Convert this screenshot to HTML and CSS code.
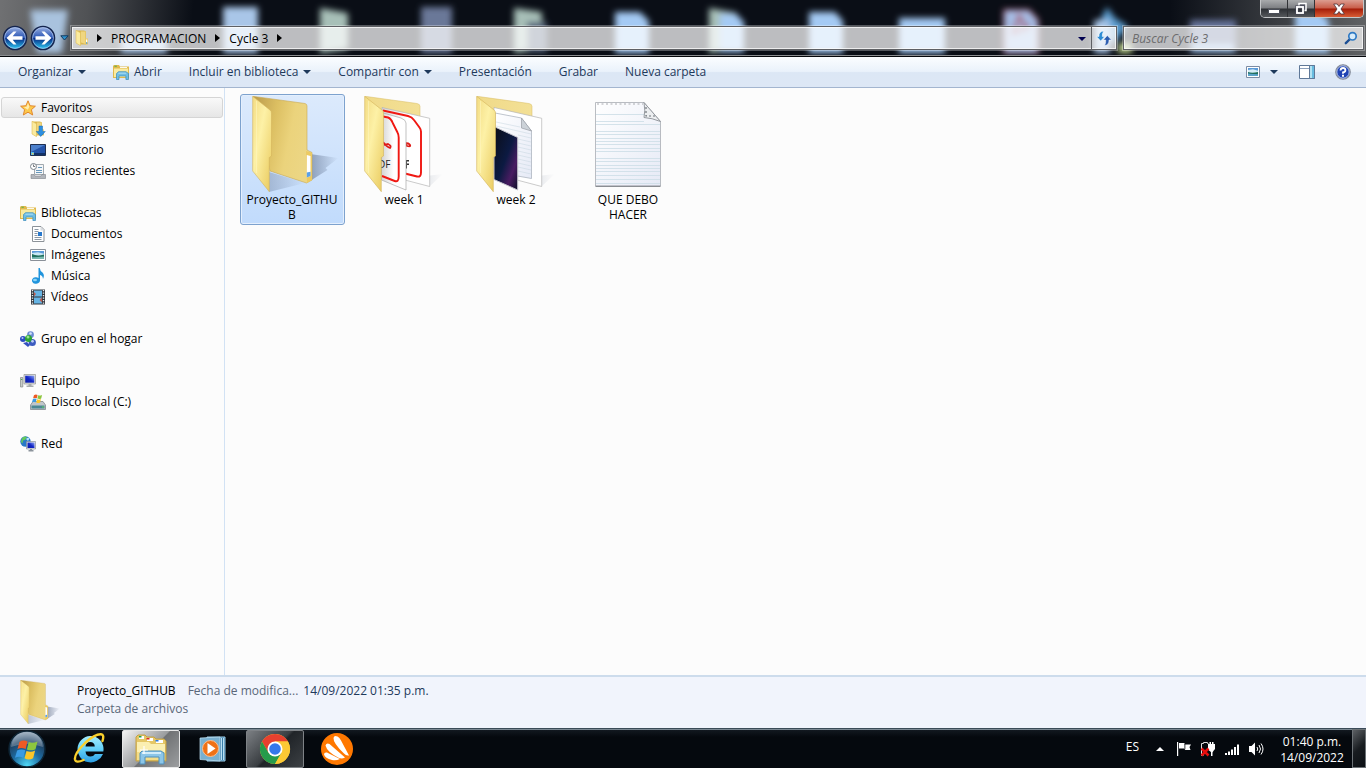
FILE: index.html
```html
<!DOCTYPE html>
<html lang="es">
<head>
<meta charset="utf-8">
<title>Cycle 3</title>
<link rel="stylesheet" href="styles.css">
</head>
<body>
<svg class="defs" width="0" height="0" aria-hidden="true">
  <defs>
    <linearGradient id="flap" x1="0" y1="0" x2="1" y2="1"><stop offset="0" stop-color="#f3dc84"/><stop offset=".4" stop-color="#fdf1a6"/><stop offset="1" stop-color="#e9c95c"/></linearGradient>
    <linearGradient id="back" x1="0" y1="0" x2="1" y2=".3"><stop offset="0" stop-color="#b99a4c"/><stop offset=".4" stop-color="#dcbf62"/><stop offset=".7" stop-color="#ebd37c"/><stop offset="1" stop-color="#ecd684"/></linearGradient>
    <linearGradient id="back-light" x1="0" y1="0" x2="1" y2="0"><stop offset="0" stop-color="#f0da88"/><stop offset="1" stop-color="#f3e096"/></linearGradient>
    <linearGradient id="shade" x1="0" y1="0" x2="1" y2="0"><stop offset="0" stop-color="#4a5a78" stop-opacity=".5"/><stop offset="1" stop-color="#4a5a78" stop-opacity="0"/></linearGradient>
    <linearGradient id="paper" x1="0" y1="0" x2="1" y2="0"><stop offset="0" stop-color="#d4d4d4"/><stop offset=".5" stop-color="#fff"/></linearGradient>
    <linearGradient id="note" x1="0" y1="0" x2="1" y2="1"><stop offset="0" stop-color="#fff"/><stop offset="1" stop-color="#e6eaf6"/></linearGradient>
    <linearGradient id="night" x1="0" y1="0" x2="1" y2="1"><stop offset="0" stop-color="#0b0d16"/><stop offset=".5" stop-color="#0c1a42"/><stop offset=".75" stop-color="#4a1c62"/><stop offset="1" stop-color="#0c1028"/></linearGradient>
    <linearGradient id="orb" x1="0" y1="0" x2="0" y2="1"><stop offset="0" stop-color="#9fb4e4"/><stop offset=".48" stop-color="#2a56b4"/><stop offset=".52" stop-color="#062c86"/><stop offset="1" stop-color="#2fd2fa"/></linearGradient>
    <radialGradient id="start" cx=".5" cy=".95" r=".9"><stop offset="0" stop-color="#4fd8f6"/><stop offset=".45" stop-color="#1d6aa0"/><stop offset=".75" stop-color="#1f4466"/><stop offset="1" stop-color="#7f97ac"/></radialGradient>
    <linearGradient id="screen" x1="0" y1="1" x2="1" y2="0"><stop offset="0" stop-color="#0818a0"/><stop offset=".5" stop-color="#1428c8"/><stop offset="1" stop-color="#8ca4f4"/></linearGradient>
    <linearGradient id="ie" x1="0" y1="0" x2="0" y2="1"><stop offset="0" stop-color="#a6ecfc"/><stop offset=".5" stop-color="#62d0f8"/><stop offset="1" stop-color="#2c9ee4"/></linearGradient>
    <symbol id="library" viewBox="0 0 16 16">
      <path fill="#e0b94c" d="M0 2l1-1h5l1 1.500h9V14H0z"/><path fill="#f9eaa0" d="M1 4.500h14V13H1z"/><path fill="#4daf4a" d="M1.500 1.700h2.300v1H1.500z"/>
      <path fill="#fff" d="M7 3h7v.9H7z"/><path fill="#6fbde4" stroke="#3a8cbc" stroke-width=".7" d="M3.500 15.500v-6l2-1.800h7.500l2.500 1.800v6h-2.600v-3.500H6v3.500z"/><path fill="#c4eafa" d="M5 9.500l1-.8h6.500l1 .8z"/>
    </symbol>
    <symbol id="folder-mini" viewBox="0 0 16 16">
      <path fill="#dcb950" d="M2 .5h8l2 1v13H5z"/><path fill="#f0d680" d="M7 1.500h4.500v12.500L7 12.500z"/><path fill="#fbeb9e" stroke="#dfbe58" stroke-width=".6" d="M2 .3l4.500 2.500V15.700L2 13z"/><path fill="#eccb64" d="M11 8.500h3v6h-3z"/><path fill="#fff" d="M12 9.500h1.300v3H12z"/><path fill="#4a9ae0" d="M12 12.200h1.300v1.500H12z"/>
    </symbol>
    <symbol id="picture" viewBox="0 0 16 16">
      <path fill="#fff" stroke="#8a9098" d="M.5 2.500h15v11H.5z"/><path fill="#5a9ad8" d="M2 4h12v8H2z"/><path fill="#c8e6f4" d="M2 6l6-.8 6 1.500V9H2z"/><path fill="#20705c" d="M2 7q5 2.500 12 .5v3H2z"/><path fill="#79b9b0" d="M2 10.500l12-1V12H2z"/>
    </symbol>
    <symbol id="folder-flap" viewBox="0 0 96 96">
      <path fill="url(#flap)" stroke="#d3b45a" stroke-width=".6" d="M8.700.3 26 14q1.500 1.200 1.500 3v43l-2.200 1.500V95.700L8.700 75z"/><path stroke="#fff6c0" stroke-width=".8" fill="none" opacity=".7" d="M12.500 5v72"/>
    </symbol>
    <symbol id="folder" viewBox="0 0 96 96">
      <path fill="url(#shade)" d="M66 58l28.500 4-13 10 2 2L66 85z"/><path fill="url(#shade)" opacity=".6" d="M25 76l36 11-36 9z"/>
      <path fill="url(#back)" stroke="#c9a850" stroke-width=".6" d="M9 .3l52 7.200q2 .5 2 2.500v44l5 2.500V84l-5.500 3L26 75z"/>
      <path fill="#ecca62" d="M62 55l6 2v27l-5 3z"/><path fill="#fff" d="M62.800 59l3.700 1v20l-3.700 1.500z"/><path fill="#58a0ea" d="M62.800 76.500l3.700-.7v4.200l-3.700 1.500z"/><use href="#folder-flap"/>
    </symbol>
  </defs>
</svg>

<header class="titlebar">
  <svg class="glass" viewBox="0 0 1366 57" preserveAspectRatio="xMinYMin slice" aria-hidden="true">
    <defs>
      <filter id="soft" x="-10%" y="-30%" width="120%" height="160%"><feGaussianBlur stdDeviation="3"/></filter>
      <linearGradient id="leftglow" x1="0" y1="20" x2="190" y2="40" gradientUnits="userSpaceOnUse"><stop offset="0" stop-color="#6f7072"/><stop offset=".45" stop-color="#505255"/><stop offset="1" stop-color="#0a0e16"/></linearGradient>
      <linearGradient id="rightglow" x1="0" y1="0" x2="1" y2="0"><stop offset="0" stop-color="#0a0e16"/><stop offset="1" stop-color="#606264"/></linearGradient>
    </defs>
    <path fill="#0a0e16" d="M0 0h1366v57H0z"/><path fill="url(#leftglow)" d="M0 0h260v57H0z"/><path fill="url(#rightglow)" d="M1170 0h196v57h-196z"/>
    <g filter="url(#soft)">
      <path fill="#a9c2de" d="M30 10h38l-6 43H37z"/><path fill="#a9c6e8" d="M121 38h46v15h-46zM223 7h35v46h-35z"/>
      <path fill="#a7c0b8" d="M320 8l28 5v36l-28 4z"/><path fill="#6a7898" d="M421 7h31v46h-31z"/>
      <path fill="#a7c0b8" d="M514 8l28 4v37l-28 4z"/><path fill="#52627a" d="M527 22h20v30h-20z"/>
      <path fill="#a4caf4" d="M615 12h25l9 9v32h-34zM809 12h26l8 9v32h-34zM899 18h46v35h-46z"/>
      <path fill="#a7c0b8" d="M709 8l28 5v36l-28 4z"/><path fill="#a4caf4" d="M720 14h16l8 8v30h-24z"/>
      <path fill="#a4bfe8" stroke="#a44a5c" stroke-width="2" d="M1004 10h25l9 10v33h-34z"/><path stroke="#a44a5c" stroke-width="3" fill="none" d="M1019 16l-6 17 15-5z"/>
      <path fill="#5c9ed0" d="M1107 7l8 11 13 8-14 18-18-16z"/><path fill="#a9c6e8" d="M1094 20h16v33h-16z"/><path fill="#bcd08c" d="M1118 43h14v10h-14z"/>
      <path fill="#66739a" d="M1190 20h46v32h-46z"/><path fill="#a4caf4" d="M1192 45h42v7h-42zM1295 12h25l9 9v32h-34z"/>
    </g>
  </svg>
  <div class="window-controls">
    <button class="win-btn" aria-label="Minimizar"><svg width="12" height="16" viewBox="0 0 12 16"><path fill="#fff" stroke="#4a4e58" d="M.5 8.500h11v4H.5z"/></svg></button>
    <button class="win-btn" aria-label="Restaurar"><svg width="12" height="13" viewBox="0 0 12 13"><path fill="#5a5e68" stroke="#fff" stroke-width="1.500" d="M4 4V1.500h7v7H8.500"/><path fill="none" stroke="#fff" stroke-width="2" d="M2 5h6v6H2z"/><path fill="none" stroke="#444858" stroke-width=".6" d="M.6 3.600h8.800v8.800H.6zM3.300 6.300h3.400v3.400H3.300z"/></svg></button>
    <button class="win-btn close" aria-label="Cerrar"><svg width="12" height="12" viewBox="0 0 12 12"><path fill="#fff" stroke="#4c3036" stroke-width=".8" d="M.7 1h3.500L6 3.500 7.800 1h3.500L8 6l3.300 5H7.800L6 8.500 4.200 11H.7L4 6z"/></svg></button>
  </div>
  <div class="nav-row">
    <div class="history">
      <button class="round" aria-label="Atrás"><svg width="26" height="26" viewBox="0 0 26 26"><circle cx="13" cy="13" r="11.500" fill="url(#orb)" stroke="#14244e" stroke-width="1.600"/><circle cx="13" cy="13" r="10.400" fill="none" stroke="#b6cdf4" stroke-width=".7"/><path fill="#fff" d="M4.500 13l7-6.500h3L10.700 11.200H20.500v3.600h-9.800l3.800 4.700h-3z"/></svg></button>
      <button class="round" aria-label="Adelante"><svg width="26" height="26" viewBox="0 0 26 26"><circle cx="13" cy="13" r="11.500" fill="url(#orb)" stroke="#14244e" stroke-width="1.600"/><circle cx="13" cy="13" r="10.400" fill="none" stroke="#b6cdf4" stroke-width=".7"/><path fill="#fff" d="M21.500 13l-7-6.500h-3l3.800 4.700H5.500v3.600h9.800l-3.800 4.700h3z"/></svg></button>
      <button class="recent" aria-label="Páginas recientes"><svg width="9" height="6" viewBox="0 0 9 6"><path fill="#2f93cf" stroke="#123a60" d="M.8.800h7.400L4.500 5z"/></svg></button>
    </div>
    <nav class="address" aria-label="Ruta">
      <svg class="crumb-icon" width="16" height="16"><use href="#folder-mini"/></svg>
      <span class="sep"></span>
      <button class="crumb">PROGRAMACION</button><span class="sep"></span>
      <button class="crumb">Cycle 3</button><span class="sep"></span>
      <button class="addr-drop" aria-label="Ubicaciones anteriores"><span class="caret navy"></span></button>
      <button class="refresh" aria-label="Actualizar"><svg width="16" height="16" viewBox="0 0 16 16"><path fill="#2e8cd4" stroke="#fff" stroke-width=".5" d="M7.800 1Q2.500 1.500 3 6.500H.5l4.200 4.500 4-4.500H6.300Q6 3.500 7.800 1z"/><path fill="#2a5cb0" stroke="#fff" stroke-width=".5" d="M8.500 15.500q4.800-.5 4.500-5.500h2.500l-4.200-4.500L7.300 10H9.700q.3 3-1.200 5.500z"/></svg></button>
    </nav>
    <form class="search" role="search"><input type="search" aria-label="Buscar" placeholder="Buscar Cycle 3"><button class="search-go" type="button" aria-label="Buscar"><svg width="14" height="14" viewBox="0 0 14 14"><path stroke="#1c4f94" stroke-width="2.400" stroke-linecap="round" d="M6 8l-4.200 4.200"/><circle cx="8.500" cy="5.300" r="3.700" fill="#d8ecfa" stroke="#2f7ac4" stroke-width="1.700"/></svg></button></form>
  </div>
</header>

<div class="toolbar">
  <button class="tool">Organizar <span class="caret"></span></button>
  <button class="tool open"><svg width="16" height="16"><use href="#library"/></svg>Abrir</button>
  <button class="tool">Incluir en biblioteca <span class="caret"></span></button>
  <button class="tool">Compartir con <span class="caret"></span></button>
  <button class="tool">Presentación</button>
  <button class="tool">Grabar</button>
  <button class="tool">Nueva carpeta</button>
  <div class="tool-right">
    <button class="tool view" aria-label="Cambiar la vista"><svg width="14" height="14" viewBox="0 0 14 14"><path fill="#fff" stroke="#7c8ca4" d="M.5 1.500h13v11H.5z"/><path fill="#5a9ad8" d="M2 3h10v8H2z"/><path fill="#d4ecf6" d="M2 5l5-.8 5 1.500V8H2z"/><path fill="#20705c" d="M2 7q4 1.500 10 0v2.500L2 8.500z"/><path fill="#5aa4c8" d="M2 9l10 .5V11H2z"/></svg></button>
    <button class="tool more" aria-label="Más opciones"><span class="caret"></span></button>
    <button class="tool pane" aria-label="Panel de vista previa"><svg width="16" height="14" viewBox="0 0 16 14"><path fill="#fff" stroke="#5f7898" d="M.5.500h15v13H.5z"/><path stroke="#8aa0bc" d="M1 3.500h9"/><path fill="#68bce0" stroke="#5f7898" d="M10.500.500h5v13h-5z"/><path fill="#b4e2f2" d="M11 1h2v12h-2z"/></svg></button>
    <button class="tool" aria-label="Ayuda"><svg width="16" height="16" viewBox="0 0 16 16"><circle cx="8" cy="8" r="7.200" fill="#1f43b4" stroke="#868c98" stroke-width="1.300"/><circle cx="8" cy="8" r="6.200" fill="none" stroke="#dfe8f8" stroke-width=".8"/><path fill="none" stroke="#fff" stroke-width="1.800" d="M5.500 6.500Q5.600 4 8 4t2.400 2.200Q10.400 8 8 8.300v1.500"/><path fill="#fff" d="M7 10.800h2v1.900H7z"/></svg></button>
  </div>
</div>

<div class="main">
  <nav class="sidebar" aria-label="Panel de navegación">
    <ul class="group">
      <li><a href="#" class="node current"><svg viewBox="0 0 16 16"><path fill="#fcc94c" stroke="#df7f22" stroke-width=".9" d="M8 .8l2.100 4.900 5.300.5-4 3.500 1.300 5.300L8 12.200 3.300 15l1.300-5.300-4-3.500 5.300-.5z"/><path fill="#ffedb0" d="M8 3l1.400 3.700-1.500 3-4-2.500 2.700-.4z"/></svg>Favoritos</a></li>
      <li><a href="#" class="node child"><svg viewBox="0 0 16 16"><use href="#folder-mini"/><path fill="#2d8fe0" stroke="#1668b0" stroke-width=".5" d="M9 5h3.500v5.500h2.800L10.700 15.500 6.300 10.500H9z"/></svg>Descargas</a></li>
      <li><a href="#" class="node child"><svg viewBox="0 0 16 16"><path fill="#2453a8" stroke="#203050" d="M.5 2.500h15v11H.5z"/><path fill="#4c80cc" d="M1 3h14L1 10z"/><path fill="#123268" d="M1 11h14v2H1z"/><path fill="#54b8ec" d="M1 10h3v3H1z"/><path fill="#eac84c" d="M2 11h1.500v1.500H2z"/></svg>Escritorio</a></li>
      <li><a href="#" class="node child"><svg viewBox="0 0 16 16"><path fill="#f4f6f8" stroke="#8c949c" stroke-width=".8" d="M4.500 1.500h9v10h-9z"/><path stroke="#6798bc" d="M8 4.500h4M6 7.500h6M6 9.500h6"/><path fill="#b2b6bc" stroke="#7c8288" stroke-width=".6" d="M1 11.500h3l1 1.500h6l1-1.500h3.500v4H1z"/><circle cx="3.500" cy="3.500" r="3" fill="#fff" stroke="#7c848c"/><path fill="none" stroke="#50565c" stroke-width=".8" d="M3.500 1.500v2h1.700"/></svg>Sitios recientes</a></li>
    </ul>
    <ul class="group">
      <li><a href="#" class="node"><svg viewBox="0 0 16 16"><use href="#library"/></svg>Bibliotecas</a></li>
      <li><a href="#" class="node child"><svg viewBox="0 0 16 16"><path fill="#fff" stroke="#8c9298" d="M2.500.500h8.500l3 3v12H2.500z"/><path fill="#d8dce0" d="M10.500 1v3.500H14z"/><path stroke="#8c98a4" d="M4.500 3.500h4M4.500 5.500h4M4.500 7.500h3M4.500 9.500h3M4.500 11.500h7M4.500 13.500h7"/><path fill="#2878cc" d="M8 6h4v4H8z"/></svg>Documentos</a></li>
      <li><a href="#" class="node child"><svg viewBox="0 0 16 16"><use href="#picture"/></svg>Imágenes</a></li>
      <li><a href="#" class="node child"><svg viewBox="0 0 16 16"><path fill="#2094dc" d="M8.500 0h1.300Q10 3 12.500 4.500 15 7 13 11q-.2-3.500-3-4v5.500a4 3.300 0 1 1-1.500-2.600z"/><ellipse cx="5" cy="12" rx="2" ry="1.200" fill="#8cd4f8"/></svg>Música</a></li>
      <li><a href="#" class="node child"><svg viewBox="0 0 16 16"><path fill="#30343a" d="M1 .5h14v15H1z"/><path fill="#66b4e4" d="M4 1.500h8v6H4zM4 8.500h8v6H4z"/><path fill="#ba5c50" d="M4 3l2 2-2 2.500zM12 8.500v5L9.500 11z"/><path stroke="#e8ecf0" stroke-width="1.400" stroke-dasharray="1.300 1.200" d="M2.500 1v14M13.500 1v14"/></svg>Vídeos</a></li>
    </ul>
    <ul class="group">
      <li><a href="#" class="node"><svg viewBox="0 0 16 16"><circle cx="10.500" cy="3.700" r="3.400" fill="#6c8cd4"/><circle cx="3" cy="8" r="3" fill="#2c4ec0"/><circle cx="12.300" cy="11.500" r="3.600" fill="#3c5cc0"/><path fill="#3450c0" d="M3 12l4-1 3 3-2 2z"/><circle cx="8.500" cy="7.500" r="3.500" fill="#2ca434"/><circle cx="8" cy="6" r="1.500" fill="#9ce490"/><circle cx="10.500" cy="2.500" r="1.300" fill="#d4e2fa"/><circle cx="2.500" cy="7" r="1" fill="#b4cafa"/><circle cx="12.500" cy="10.300" r="1.400" fill="#bccdf6"/></svg>Grupo en el hogar</a></li>
    </ul>
    <ul class="group">
      <li><a href="#" class="node"><svg viewBox="0 0 16 16"><path fill="#e0e0dc" stroke="#909494" stroke-width=".7" d="M4 1.500h11.500v9.500H4z"/><path fill="url(#screen)" d="M5.200 2.700h9.100v7H5.200z"/><path fill="#a8acac" d="M8.500 11h3v1.500h2V14h-7v-1.500h2z"/><path fill="#c8ccc8" stroke="#848888" stroke-width=".7" d="M.500 4.500h2.300v9.500H.5z"/><path fill="#4caf50" d="M1 6h1.300v1H1z"/></svg>Equipo</a></li>
      <li><a href="#" class="node child"><svg viewBox="0 0 16 16"><path fill="#c0c6ca" stroke="#747c82" stroke-width=".7" d="M.5 11L3 7.500h10L15.500 11v4.500H.5z"/><path fill="#4b8894" d="M1.500 11.500h13v3h-13z"/><path fill="#62d05c" d="M12 12.500h2v1h-2z"/><g transform="translate(2 -1) scale(.56)"><path fill="#ee5a24" d="M3.500 4q3-2 6.500-.5l-1.500 6Q5 8 2 9.500z"/><path fill="#8cc63e" d="M11 4q3 1.500 7-.5l-1.600 6.200Q13 11.500 9.500 10z"/><path fill="#3a9be4" d="M1.700 10.700q3-1.400 6.500-.2l-1.600 6Q3.500 15 0 16.500z"/><path fill="#fcc628" d="M9.200 11.200q3.400 1.500 6.900-.4l-1.600 6.200q-3.500 2-6.900 0z"/></g></svg>Disco local (C:)</a></li>
    </ul>
    <ul class="group">
      <li><a href="#" class="node"><svg viewBox="0 0 16 16"><circle cx="5.500" cy="5.500" r="5.200" fill="#2878c8"/><path fill="#62c85c" d="M3 1q3-1.200 4 .5L5 4l-2 .5-.5 3L1 6q0-3 2-5z"/><path fill="#b4e4fa" d="M6 3q2-2 3.500-.5L8 5z"/><path fill="#dfe2e6" stroke="#7c8490" stroke-width=".6" d="M6.500 5.500h9v7.500h-9z"/><path fill="url(#screen)" d="M7.500 6.500h7v5.500h-7z"/><path fill="#8c949c" d="M10 13h2v1h1.500v1.500h-5V14H10z"/></svg>Red</a></li>
    </ul>
  </nav>

  <main class="files">
    <button class="file selected"><svg class="thumb" viewBox="0 0 96 96"><use href="#folder"/></svg><span>Proyecto_GITHU<br>B</span></button>
    <button class="file"><svg class="thumb" viewBox="0 0 96 96">
      <path fill="url(#shade)" opacity=".25" d="M70 80l17-2-13 12z"/>
      <path fill="url(#back-light)" stroke="#d8bc64" stroke-width=".5" d="M9 .3l52 7.200q3 .5 3 3V25L26 60z"/>
      <path fill="url(#paper)" stroke="#b4b4b4" stroke-width=".7" d="M26 11.500l47.700 10.800v68.200L26 78z"/>
      <path fill="none" stroke="#f01812" stroke-width="1.900" d="M27 14.500l25 5.500q4 1 6 4l5.500 7.500q1.500 2 1.500 4v41q0 5-4 4l-12-3"/>
      <path fill="#333" d="M50 64h3v1.500h-2v2h2v1.500h-2v3.500h-1z"/><path fill="none" stroke="#df1c18" stroke-width="1.800" d="M48 47q5 0 6 2t-3 1z"/>
      <path fill="url(#paper)" stroke="#a8a8a8" stroke-width=".7" d="M25.500 16.500L45 22q5 2 5 5v67L25.500 84z"/>
      <path fill="none" stroke="#f01812" stroke-width="1.900" d="M27 20.500l5 1q3 1 5 6l4.500 9q1.200 2 1.200 5v39q0 6-4 4.500L26 80"/>
      <path fill="none" stroke="#df1c18" stroke-width="1.800" d="M27 46q4 5 7 6 2-2-2-4l-4 1"/><text x="22" y="72" font-family="Open Sans, sans-serif" font-size="10" fill="#222">DF</text><use href="#folder-flap"/></svg><span>week 1</span></button>
    <button class="file"><svg class="thumb" viewBox="0 0 96 96">
      <path fill="url(#shade)" opacity=".25" d="M70 80l17-2-13 12z"/>
      <path fill="url(#back-light)" stroke="#d8bc64" stroke-width=".5" d="M9 .3l52 7.200q3 .5 3 3V25L26 60z"/>
      <path fill="#fff" stroke="#b4b4b4" stroke-width=".7" d="M26 11.500l47.700 10.800v68.200L26 78z"/>
      <path fill="url(#note)" stroke="#a4acb8" stroke-width=".7" d="M27 17l26.500 5 10 13v47.500L27 76z"/><path fill="#ccd2d8" stroke="#989ca4" stroke-width=".7" d="M53.500 22v10l10 3z"/>
      <path stroke="#c4d4de" stroke-width=".5" d="M28 26l24 5M28 30l35 8M50 39l13 3M50 43l13 3M50 47l13 3M50 51l13 3M50 55l13 3M50 59l13 3M50 63l13 3M50 67l13 3M50 71l13 3M50 75l13 3"/>
      <path fill="url(#night)" stroke="#c4c4cc" stroke-width="1" d="M26 30.500l23.700 11V94L26 83.500z"/><use href="#folder-flap"/></svg><span>week 2</span></button>
    <button class="file"><svg class="thumb" viewBox="0 0 96 96">
      <path fill="url(#note)" stroke="#a8acb2" stroke-width=".8" d="M15.500 6.500H64l16.500 19V90h-65z"/><path stroke="#777b80" d="M15.500 90.300h65"/>
      <path stroke="#a9abb0" stroke-width="1" stroke-dasharray="2 2.500" d="M17 8h46"/>
      <path stroke="#cfdfe8" stroke-width=".9" d="M16 18.500h48M16 25.500h48M16 28.500h64M16 35.500h64M16 38.500h64M16 42.500h64M16 45.500h64M16 48.500h64M16 52.500h64M16 55.500h64M16 62.500h64M16 65.500h64M16 69.500h64M16 72.500h64M16 75.500h64M16 79.500h64M16 83.500h64M16 87.500h64"/>
      <path fill="#eceef0" stroke="#8b9096" stroke-width=".9" d="M64 6.500q1.500 8 0 15 8 .5 16.500 4z"/><path fill="none" stroke="#6f747a" stroke-width="1.200" stroke-dasharray="2 2" d="M66 11v9h9"/></svg><span>QUE DEBO HACER</span></button>
  </main>
</div>

<footer class="details">
  <svg class="details-icon" viewBox="6 0 90 96"><use href="#folder" width="96" height="96"/></svg>
  <div class="details-text">
    <div class="details-line"><span class="name">Proyecto_GITHUB</span><span class="label">Fecha de modifica...</span><span class="value">14/09/2022 01:35 p.m.</span></div>
    <div class="label">Carpeta de archivos</div>
  </div>
</footer>

<div class="taskbar">
  <button class="start" aria-label="Inicio"><svg width="38" height="38" viewBox="0 0 38 38"><circle cx="19" cy="19" r="18" fill="url(#start)" stroke="#0d2434" stroke-width="1.500"/><path fill="#fff" opacity=".25" d="M3 17Q5 2 19 2t16 15q-16-6-32 0z"/><g transform="translate(7 7) scale(1.250)"><path fill="#ee5a24" d="M3.500 4q3-2 6.500-.5l-1.500 6Q5 8 2 9.500z"/><path fill="#8cc63e" d="M11 4q3 1.500 7-.5l-1.600 6.200Q13 11.500 9.500 10z"/><path fill="#3a9be4" d="M1.700 10.700q3-1.400 6.500-.2l-1.600 6Q3.500 15 0 16.500z"/><path fill="#fcc628" d="M9.200 11.200q3.400 1.500 6.900-.4l-1.600 6.200q-3.500 2-6.900 0z"/></g></svg></button>
  <button class="task" aria-label="Internet Explorer"><svg width="32" height="32" viewBox="0 0 32 32"><path fill="url(#ie)" fill-rule="evenodd" d="M17 3a13 13 0 0 1 13.300 15.500H12.500q.5 5 5 5 3 0 4.500-2.500h8A13.200 13.200 0 1 1 17 3zM12.500 13.500h9.300Q21.500 9 17.200 9t-4.700 4.500z"/><path fill="none" stroke="#fad02c" stroke-width="2.400" stroke-linecap="round" d="M29.500 8Q31.500 1.500 28 1.300 22 1 12 10 1 21 2 26.500q1 4 8.500.5"/></svg></button>
  <button class="task active" aria-label="Explorador de archivos"><svg width="34" height="32" viewBox="0 0 34 32"><path fill="#e5c766" stroke="#c3a044" d="M2 4l2-2h7l2 2h7l2 2h8l2 2v20H2z"/><path fill="#fff" d="M5 3h5v3H5zM13 5h6v3h-6zM22 7h7v3h-7z"/><path fill="#1ba24a" d="M5 3h2.500v1.500H5z"/><path fill="#dc2c20" d="M12.500 5h3v1.500h-3z"/><path fill="#2e7ce4" d="M21.500 7h3v1.500h-3z"/><path fill="#fbefb2" d="M3 9h12l2 2h14v16H3z"/><path fill="#f3dd8a" d="M3 19h28v8H3z"/><path fill="#8cc6e8" stroke="#4e90bc" d="M6 31V20l2-2h19l3 2v11h-5v-7H11v7z"/><path fill="#d0ecfa" d="M8 19h19v2H8z"/><path stroke="#fff" stroke-width="1.200" d="M10 13v8M6 17h8"/></svg></button>
  <button class="task" aria-label="Reproductor de Windows Media"><svg width="28" height="26" viewBox="0 0 28 26"><path fill="#397ca8" stroke="#9ed0ec" d="M8 1h18v24H8z"/><path stroke="#b9dff2" d="M22.500 2v22M24.500 2v22"/><path fill="#79b0d0" stroke="#c2e2f4" stroke-width=".7" d="M1 2l20-1v24L1 23.500z"/><circle cx="11.500" cy="12.500" r="8" fill="#ef7116" stroke="#fac090"/><path fill="#fff" d="M8.500 7l8 5.500-8 5.500z"/></svg></button>
  <button class="task running" aria-label="Google Chrome"><svg width="32" height="32" viewBox="0 0 32 32"><circle cx="16" cy="16" r="15" fill="#fcc934"/><path fill="#e8402f" d="M3 8.500A15 15 0 0 1 29 8.500H16L9.500 20z"/><path fill="#269b4b" d="M3 8.500A15 15 0 0 0 16 31l6.500-11.300H9.500z"/><path fill="#fcc934" d="M29 8.500A15 15 0 0 1 16 31l6.500-11.300L16 8.500z"/><circle cx="16" cy="16" r="7.500" fill="#fff"/><circle cx="16" cy="16" r="5.800" fill="#3478ea"/></svg></button>
  <button class="task" aria-label="Avast"><svg width="32" height="32" viewBox="0 0 32 32"><circle cx="16" cy="16" r="16" fill="#ff7800"/><path fill="#fff" d="M12.500 5q.5-3 4-1.500 2 1 3.500 4l8 15q-3 .5-5-2Q12 10 12.500 5zM4.500 12.500q1-3 4-1.500L24 24.500q-3 1.500-6 .5Q6 19 4.500 12.500zM3 21.500q0-2.500 3-2l13 6.500q-4 2-8 1-7-2-8-5.500z"/></svg></button>
  <div class="tray">
    <button class="lang">ES</button>
    <button class="tray-btn up" aria-label="Mostrar iconos ocultos"><svg width="8" height="4" viewBox="0 0 8 4"><path fill="#fff" d="M4 0l4 4H0z"/></svg></button>
    <button class="tray-btn" aria-label="Centro de actividades"><svg width="16" height="16" viewBox="0 0 16 16"><path fill="#fff" d="M1 1h1.200v14H1zM3 2h5.500v1.500H15L13.500 6l1 3H9.500L8 7.500H3z"/><path fill="#05090e" d="M8.500 3h.8v5h-.8z"/></svg></button>
    <button class="tray-btn" aria-label="Batería"><svg width="16" height="16" viewBox="0 0 16 16"><path fill="none" stroke="#ddd" d="M3.500 14.500h-2v-12h2v-1h4v1h1"/><path fill="#fff" d="M8 3h1.500V1h1.500v2h1V1h1.500v2H15v5q-2 2-2.500 3.500V15H11v-4Q8 9 8 8z"/><path stroke="#e80d0d" stroke-width="2.500" d="M1.500 7.500l7 7M8.500 7.500l-7 7"/></svg></button>
    <button class="tray-btn" aria-label="Red"><svg width="16" height="16" viewBox="0 0 16 16"><path fill="#fff" d="M1 12h2v2H1zM4 10.500h2V14H4zM7 8.500h2V14H7zM10 6h2v8h-2zM13 3.500h2V14h-2z"/></svg></button>
    <button class="tray-btn" aria-label="Volumen"><svg width="16" height="16" viewBox="0 0 16 16"><path fill="#fff" d="M1 5h2.500L7 1.500v13L3.500 11H1z"/><path fill="none" stroke="#fff" d="M9 6q1.500 2 0 4M11 4q3 4 0 8M13 2.500q4 5.500 0 11"/></svg></button>
    <button class="clock"><time>01:40 p.m.<br>14/09/2022</time></button>
    <button class="show-desktop" aria-label="Mostrar escritorio"></button>
  </div>
</div>
</body>
</html>
```
FILE: styles.css
```css
* { box-sizing: border-box; }

body {
  margin: 0;
  height: 100vh;
  display: flex;
  flex-direction: column;
  overflow: hidden;
  font: 12px/15px "Open Sans", "Noto Sans", sans-serif;
  color: #000;
  background: #fcfcfc;
}

button, input { font: inherit; color: inherit; }
button { padding: 0; border: 0; background: none; white-space: nowrap; }
svg { display: block; flex: none; }
.defs { position: absolute; }

/* Title bar */
.titlebar {
  position: relative;
  flex: none;
  height: 57px;
  padding-top: 25px;
  overflow: hidden;
  background: #0a0e16;
  border-bottom: 1px solid #05070b;
  box-shadow: inset 0 -1px #8b8d90;
}
.glass { position: absolute; top: 0; left: 0; width: 100%; height: 55px; }
.nav-row { position: relative; display: flex; align-items: center; padding-right: 2px; }
.history { display: flex; align-items: center; gap: 2px; width: 71px; padding-left: 2px; }
.recent { padding: 2px; }

.address, .search {
  display: flex;
  align-items: center;
  height: 24px;
  border: 1px solid #5e6064;
  outline: 1px solid rgba(255, 255, 255, 0.3);
  background: rgba(255, 255, 255, 0.73);
  box-shadow: inset 0 0 0 1px rgba(255, 255, 255, 0.7);
}
.address { flex: 1; }
.crumb-icon { margin: 0 7px 0 2px; }
.sep {
  border: 4px solid transparent;
  border-left: 5px solid #000;
  border-right: 0;
}
.crumb { padding: 0 9px; }
.addr-drop { margin-left: auto; padding: 0 5px; }
.refresh { display: flex; align-items: center; height: 22px; padding: 0 4px; border-left: 1px solid #5e6064; }
.caret { display: inline-block; border: 4px solid transparent; border-top-color: #1e395b; border-bottom: 0; }
.caret.navy { border-top-color: #000050; vertical-align: middle; }

.search { width: 241px; margin-left: 6px; padding: 0 5px 0 8px; }
.search input { flex: 1; min-width: 0; padding: 0; border: 0; outline: 0; background: none; font-style: italic; }
.search input::placeholder { color: #6c6c6e; opacity: 1; }

.window-controls {
  position: absolute;
  z-index: 1;
  top: 0;
  right: 2px;
  display: flex;
  height: 18px;
  border: 1px solid #c4c6c8;
  border-top: 0;
  border-radius: 0 0 5px 5px;
  overflow: hidden;
}
.win-btn {
  width: 27px;
  display: flex;
  align-items: center;
  justify-content: center;
  border-right: 1px solid #303236;
  background: linear-gradient(#a8aaac, #7c7e82 48%, #2c2f34 52%, #55585c);
}
.win-btn.close { width: 48px; border: 0; background: linear-gradient(#dc9d90, #c85c48 48%, #a41c08 52%, #d85c34); }

/* Command bar */
.toolbar {
  flex: none;
  display: flex;
  align-items: center;
  gap: 27px;
  height: 31px;
  padding: 0 15px 1px 18px;
  color: #1e395b;
  background: linear-gradient(#fbfdff, #eaf2fb 48%, #dce7f5 52%, #dde7f5);
  border-bottom: 1px solid #a3b5cf;
}
.tool { display: flex; align-items: center; gap: 5px; }
.tool-right { display: flex; align-items: center; margin-left: auto; }
.more { padding: 0 21px 0 10px; }
.pane { margin-right: 20px; }

/* Navigation pane and file list */
.main { flex: 1; min-height: 0; display: flex; }
.sidebar { flex: none; width: 225px; padding: 9px 1px 0; border-right: 1px solid #d2e2f4; }
.group { margin: 0 0 21px; padding: 0; list-style: none; }
.node {
  display: flex;
  align-items: center;
  gap: 5px;
  height: 21px;
  padding-left: 18px;
  border: 1px solid transparent;
  border-radius: 3px;
  color: #000;
  text-decoration: none;
}
.node svg { width: 16px; height: 16px; }
.node.child { padding-left: 28px; }
.node.current { border-color: #d5d5d5; background: linear-gradient(#f9f9f9, #e6e6e6); }

.files { flex: 1; display: flex; flex-wrap: wrap; align-content: flex-start; gap: 7px; padding: 6px 15px; }
.file {
  display: flex;
  flex-direction: column;
  align-items: center;
  width: 105px;
  min-height: 131px;
  padding: 1px 4px 1px 3px;
  border: 1px solid transparent;
  border-radius: 3px;
  white-space: normal;
}
.file span { max-width: 92px; }
.file.selected { border-color: #7da2ce; background: linear-gradient(#dceafc, #c1dbfc); box-shadow: inset 0 0 0 1px #e4effd; }
.thumb { width: 96px; height: 96px; }

/* Details pane */
.details {
  flex: none;
  display: flex;
  height: 53px;
  padding: 3px 19px;
  border-top: 2px solid #cddcec;
  background: #f1f4fc;
  color: #1e395b;
}
.details-icon { width: 42px; height: 44px; }
.details-text { padding: 2px 0 0 16px; line-height: 18px; }
.details-line { display: flex; }
.name { color: #000; margin-right: 12px; }
.label { color: #5a6779; }
.value { margin-left: 5px; }

/* Task bar */
.taskbar {
  flex: none;
  display: flex;
  align-items: center;
  gap: 4px;
  height: 40px;
  padding-left: 8px;
  color: #fff;
  background: linear-gradient(#141b22, #05090e 8px, #05090e);
  border-top: 1px solid #3b4b58;
  box-shadow: inset 0 1px #7b8893;
}
.start { margin-right: 14px; }
.task {
  display: flex;
  align-items: center;
  justify-content: center;
  width: 58px;
  height: 38px;
  border: 1px solid transparent;
  border-radius: 2px;
}
.start + .task { margin-left: -4px; }
.task.active { border-color: #e6e6e6; background: linear-gradient(135deg, #f4f4f4, #9a9c9e 50%, #707274 52%, #9c9ea0); }
.task.running { border-color: #7e8286; background: linear-gradient(135deg, #7c8084, #3a3e42 48%, #202428 52%, #3c4044); }
.tray { display: flex; align-items: center; height: 100%; margin-left: auto; }
.lang { margin-right: 17px; padding-bottom: 5px; }
.up { margin-right: 12px; }
.tray-btn + .tray-btn { margin-right: 8px; }
.clock { width: 80px; padding-top: 2px; line-height: 16px; text-align: center; }
.show-desktop { width: 14px; height: 39px; border: 1px solid #6c7276; background: linear-gradient(135deg, #5c6064, #181c20 50%, #0c1014); }
```
